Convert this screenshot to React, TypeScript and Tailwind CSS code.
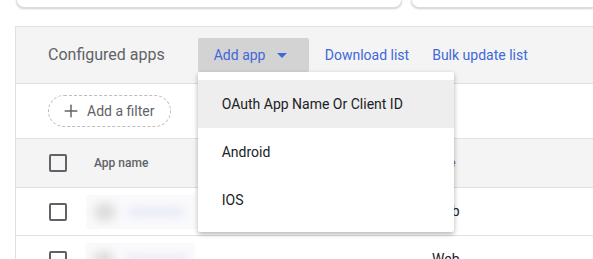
import { Plus } from "lucide-react";

function Checkbox() {
  return <div className="h-[18px] w-[18px] rounded-[2px] border-2 border-[#5f6368]" />;
}

function Blurred({ wide }: { wide?: boolean }) {
  return (
    <div className="flex h-[34px] w-[110px] items-center gap-3 bg-[#fafafc] px-2">
      <div className="h-[18px] w-[22px] rounded-full bg-[#dcdcdc] blur-[5px]" />
      <div className={`h-[10px] ${wide ? "w-[64px]" : "w-[56px]"} rounded bg-[#e8ebf5] blur-[4px]`} />
    </div>
  );
}

const menuItems = ["OAuth App Name Or Client ID", "Android", "IOS"];

export default function App() {
  return (
    <div className="h-[259px] w-[593px] overflow-hidden bg-white text-[14px] text-[#202124] font-['Roboto',sans-serif]">
      {/* Top cards */}
      <div className="flex gap-[9px] pl-[16px]">
        <div className="h-[8px] w-[386px] rounded-b-[9px] border border-t-0 border-[#dadce0] bg-white shadow-[0_1px_2px_rgba(60,64,67,0.25)]" />
        <div className="h-[8px] flex-1 rounded-bl-[9px] border border-t-0 border-r-0 border-[#dadce0] bg-white shadow-[0_1px_2px_rgba(60,64,67,0.25)]" />
      </div>

      {/* Panel */}
      <div className="ml-[15px] mt-[18px] border-l border-t border-[#e0e0e0]">
        {/* Header */}
        <div className="flex h-[57px] items-center border-b border-[#e0e0e0] bg-[#f4f4f4] pl-[32px]">
          <span className="text-[16px] text-[#5f6368]">Configured apps</span>
          <div className="relative ml-[33px]">
            <button className="flex h-[34px] w-[111px] items-center gap-[12px] rounded-[2px] bg-[#d3d3d3] pl-[16px] text-[#3f68d9]">
              <span>Add app</span>
              <svg width="10" height="5" viewBox="0 0 10 5">
                <path d="M0 0 L10 0 L5 5 Z" fill="#3f68d9" />
              </svg>
            </button>
            <div className="absolute left-0 top-full z-10 w-[256px] rounded-[2px] bg-white py-[8px] shadow-[0_2px_4px_rgba(0,0,0,0.2),0_2px_6px_rgba(0,0,0,0.12)]">
              {menuItems.map((item, i) => (
                <div
                  key={item}
                  className={`flex h-[48px] items-center px-[24px] text-[#202124] ${i === 0 ? "bg-[#eeeeee]" : ""}`}
                >
                  {item}
                </div>
              ))}
            </div>
          </div>
          <a className="ml-[16px] text-[#3f68d9]">Download list</a>
          <a className="ml-[23px] text-[#3f68d9]">Bulk update list</a>
        </div>

        {/* Filter row */}
        <div className="flex h-[55px] items-center border-b border-[#e0e0e0] pl-[32px]">
          <div className="flex h-[32px] w-[123px] items-center gap-[6px] rounded-full border border-dashed border-[#bdbdbd] pl-[12px] text-[#5f6368]">
            <Plus size={20} strokeWidth={1.75} />
            <span>Add a filter</span>
          </div>
        </div>

        {/* Table header */}
        <div className="flex h-[49px] items-center border-b border-[#e0e0e0] bg-[#f4f4f4] pl-[33px] text-[12px] font-medium text-[#5f6368]">
          <Checkbox />
          <span className="ml-[27px] w-[334px]">App name</span>
          <span className="text-[13px] font-normal">Type</span>
        </div>

        {/* Rows */}
        <div className="flex h-[48px] items-center border-b border-[#e0e0e0] pl-[33px]">
          <Checkbox />
          <div className="ml-[19px] w-[346px]">
            <Blurred />
          </div>
          <span>Web</span>
        </div>
        <div className="flex h-[48px] items-center border-b border-[#e0e0e0] pl-[33px]">
          <Checkbox />
          <div className="ml-[18px] w-[347px]">
            <Blurred wide />
          </div>
          <span>Web</span>
        </div>
      </div>
    </div>
  );
}
